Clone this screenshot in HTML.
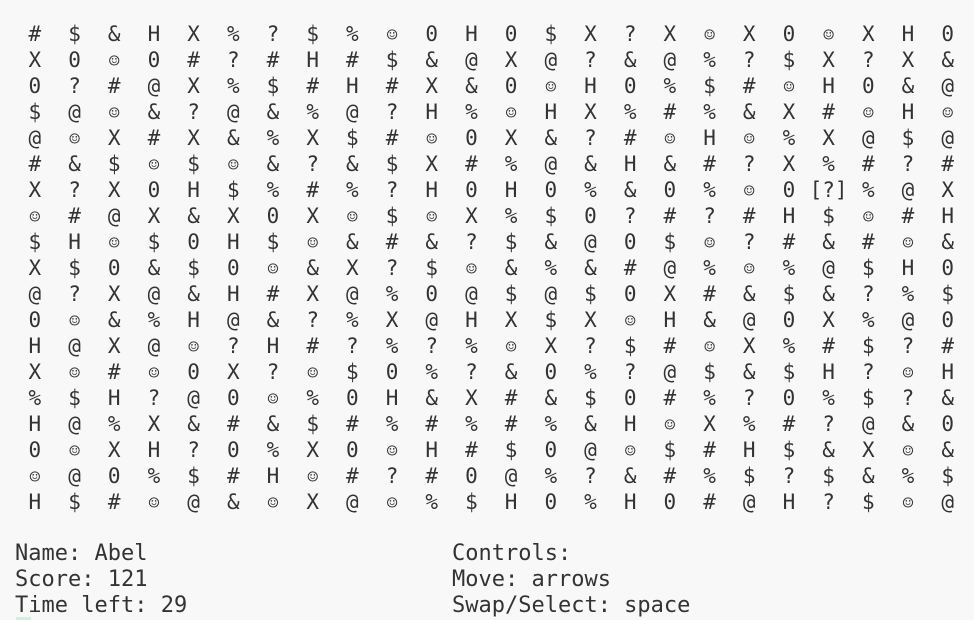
<!DOCTYPE html>
<html><head><meta charset="utf-8"><style>
html,body{margin:0;padding:0;background:#f8f8f8;width:974px;height:620px;overflow:hidden}
#g{position:absolute;left:15px;top:21px;font-family:"DejaVu Sans Mono","Liberation Mono",monospace;font-size:21px;color:#333}
.r{height:26px;line-height:26px;white-space:nowrap}
.r span{display:inline-block;width:39.7px;text-align:center}
.s{font-size:18px}
.t{position:absolute;font-family:"DejaVu Sans Mono","Liberation Mono",monospace;font-size:22px;line-height:26px;color:#333;white-space:pre}
</style></head><body>
<div id="g"></div>
<div class="t" style="left:15px;top:541px">Name: Abel
Score: 121
Time left: 29</div>
<div class="t" style="left:452px;top:541px">Controls:
Move: arrows
Swap/Select: space</div>
<div style="position:absolute;left:16px;top:617px;width:15px;height:3px;background:#d5eedb"></div>
<script>
var rows=[
"# $ & H X % ? $ % ☺ 0 H 0 $ X ? X ☺ X 0 ☺ X H 0",
"X 0 ☺ 0 # ? # H # $ & @ X @ ? & @ % ? $ X ? X &",
"0 ? # @ X % $ # H # X & 0 ☺ H 0 % $ # ☺ H 0 & @",
"$ @ ☺ & ? @ & % @ ? H % ☺ H X % # % & X # ☺ H ☺",
"@ ☺ X # X & % X $ # ☺ 0 X & ? # ☺ H ☺ % X @ $ @",
"# & $ ☺ $ ☺ & ? & $ X # % @ & H & # ? X % # ? #",
"X ? X 0 H $ % # % ? H 0 H 0 % & 0 % ☺ 0 [?] % @ X",
"☺ # @ X & X 0 X ☺ $ ☺ X % $ 0 ? # ? # H $ ☺ # H",
"$ H ☺ $ 0 H $ ☺ & # & ? $ & @ 0 $ ☺ ? # & # ☺ &",
"X $ 0 & $ 0 ☺ & X ? $ ☺ & % & # @ % ☺ % @ $ H 0",
"@ ? X @ & H # X @ % 0 @ $ @ $ 0 X # & $ & ? % $",
"0 ☺ & % H @ & ? % X @ H X $ X ☺ H & @ 0 X % @ 0",
"H @ X @ ☺ ? H # ? % ? % ☺ X ? $ # ☺ X % # $ ? #",
"X ☺ # ☺ 0 X ? ☺ $ 0 % ? & 0 % ? @ $ & $ H ? ☺ H",
"% $ H ? @ 0 ☺ % 0 H & X # & $ 0 # % ? 0 % $ ? &",
"H @ % X & # & $ # % # % # % & H ☺ X % # ? @ & 0",
"0 ☺ X H ? 0 % X 0 ☺ H # $ 0 @ ☺ $ # H $ & X ☺ &",
"☺ @ 0 % $ # H ☺ # ? # 0 @ % ? & # % $ ? $ & % $",
"H $ # ☺ @ & ☺ X @ ☺ % $ H 0 % H 0 # @ H ? $ ☺ @"];
var h="";
rows.forEach(function(r){h+='<div class="r">';r.split(" ").forEach(function(c){h+=c=="☺"?'<span class="s">☺</span>':'<span>'+c+'</span>';});h+='</div>';});
document.getElementById("g").innerHTML=h;
</script>
</body></html>
